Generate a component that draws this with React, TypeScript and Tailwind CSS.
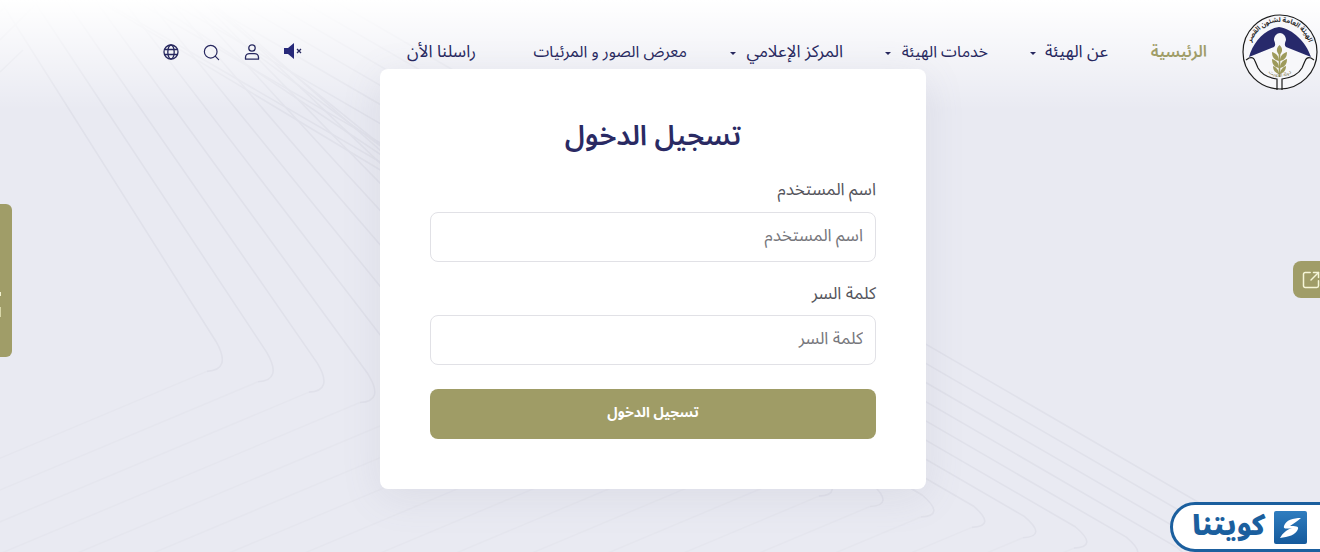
import { Search, SquareArrowOutUpRight } from "lucide-react";

const arabic = "font-['Noto_Sans_Arabic','DejaVu_Sans','Noto_Sans',sans-serif]";

// the page's background artwork: a family of bent lines
function BackgroundLines() {
  const lines = Array.from({ length: 23 }, (_, i) => {
    const cx = 229 + 51 * i;
    const cy = 362 + 10.4 * i;
    const slope = Math.max(1.58 - 0.07 * i, 0.58);
    const top = cy / slope;
    const r = 24;
    const ux = cx - r / Math.hypot(1, slope);
    const uy = cy - (r * slope) / Math.hypot(1, slope);
    const lx = cx - r * 0.92;
    const ly = cy + r * 0.39;
    return {
      upper: `M${cx - top} 0L${ux} ${uy}Q${cx + 3} ${cy + 8} ${lx} ${ly}`,
      lower: `M${lx} ${ly}L${cx - 700} ${cy + 294}`,
    };
  });
  return (
    <svg className="absolute inset-0 h-full w-full" viewBox="0 0 1320 552" fill="none">
      {lines.map(({ upper, lower }) => (
        <g key={upper}>
          <path d={upper} stroke="#e0e1ea" strokeWidth="1.6" />
          <path d={lower} stroke="#e5e6ee" strokeWidth="1.5" />
        </g>
      ))}
      <path d="M0 72L23 50M0 40L40 0M0 12L12 0" stroke="#e0e1ea" strokeWidth="1.6" />
    </svg>
  );
}

function Logo() {
  return (
    <svg width="78" height="80" viewBox="0 0 78 80" fill="none">
      <defs>
        <path id="logo-arc" d="M9 46A30.5 30.5 0 1 1 69 46" />
        <path id="logo-arc-low" d="M25 58A18 18 0 0 0 53 58" />
      </defs>
      <circle cx="39" cy="40" r="37" fill="#f7f7fa" stroke="#1c1c1c" strokeWidth="1.2" />
      <text fontSize="6.6" fontWeight="700" fill="#2b2b2b" direction="rtl">
        <textPath href="#logo-arc" startOffset="50%" textAnchor="middle">
          الهيئة العامة لشئون القصر
        </textPath>
      </text>
      <path
        d="M8 45C12 30 24 17 38 15C52 17 65 30 70 45L45 35C43 33 44 31 45 28C45 24 42 21 39 21C36 21 33 24 33 28C34 31 35 33 33 35Z"
        fill="#27296b"
      />
      <path d="M38.5 36V65" stroke="#9d9a5b" strokeWidth="1.6" />
      <path
        d="M38.5 33C35 36 35 40 38.5 43C42 40 42 36 38.5 33ZM31 40C31 45 33 48 38 49C38 44 35 41 31 40ZM46 40C46 45 44 48 39 49C39 44 42 41 46 40ZM31 47C31 52 33 55 38 56C38 51 35 48 31 47ZM46 47C46 52 44 55 39 56C39 51 42 48 46 47ZM32 54C32 59 35 61 38 62C38 58 35 55 32 54ZM45 54C45 59 42 61 39 62C39 58 42 55 45 54Z"
        fill="#9d9a5b"
      />
      <path
        d="M5 48L8 46C11 45 13 46 14 49L17 56C21 63 29 66 36 67V78M73 48L70 46C67 45 65 46 64 49L61 56C57 63 49 66 41 67V78"
        stroke="#1c1c1c"
        strokeWidth="1.2"
      />
      <text fontSize="5" fill="#77764a" direction="rtl">
        <textPath href="#logo-arc-low" startOffset="50%" textAnchor="middle">
          دولة الكويت
        </textPath>
      </text>
    </svg>
  );
}

function Caret() {
  return <span className="mt-[2px] h-0 w-0 border-x-[3px] border-t-[3px] border-x-transparent border-t-[#27285f]" />;
}

function NavItem({ label, caret, className }: { label: string; caret?: boolean; className: string }) {
  return (
    <a className={`flex shrink-0 items-center justify-between whitespace-nowrap leading-none ${className}`}>
      {label}
      {caret && <Caret />}
    </a>
  );
}

function Header() {
  return (
    <header dir="rtl" className="relative flex h-[104px] items-start pr-[1px] pt-[12px]">
      <Logo />
      <nav className="mr-[34px] flex h-[80px] items-center text-[#27285f]">
        <NavItem label="الرئيسية" className="ml-[40px] w-[59px] text-[16px] font-semibold text-[#a09d68]" />
        <NavItem label="عن الهيئة" caret className="ml-[42px] w-[78px] text-[17px]" />
        <NavItem label="خدمات الهيئة" caret className="ml-[42px] w-[103px] text-[16px]" />
        <NavItem label="المركز الإعلامي" caret className="ml-[43px] w-[113px] text-[17px]" />
        <NavItem label="معرض الصور و المرئيات" className="ml-[54px] w-[157px] text-[16px]" />
        <NavItem label="راسلنا الأن" className="ml-[102px] w-[72px] text-[17px]" />
      </nav>
      <div className="flex h-[80px] items-center gap-[24px] text-[#27285f]">
        <svg width="18" height="16" viewBox="0 0 18 16" className="-mt-[3px]">
          <path d="M0 5H4L10 0V16L4 11H0Z" fill="#27297a" />
          <path d="M13 6L17 10M17 6L13 10" stroke="#27285f" strokeWidth="1.3" />
        </svg>
        <svg width="16" height="16" viewBox="0 0 16 16" fill="none" stroke="currentColor" strokeWidth="1.3">
          <circle cx="8" cy="4" r="3.2" />
          <path d="M1.5 15.2V13.4C1.5 11 3.5 9.6 5.5 9.6H10.5C12.5 9.6 14.5 11 14.5 13.4V15.2Z" strokeLinejoin="round" />
        </svg>
        <Search size={19} strokeWidth={1.5} className="-mx-[1px]" />
        <svg width="16" height="16" viewBox="0 0 16 16" fill="none" stroke="currentColor" strokeWidth="1.3">
          <circle cx="8" cy="8" r="7" />
          <ellipse cx="8" cy="8" rx="3.2" ry="7" />
          <path d="M1.6 5.5H14.4M1.6 10.5H14.4" />
        </svg>
      </div>
    </header>
  );
}

function Field({ label, className }: { label: string; className: string }) {
  return (
    <label className={`flex flex-col ${className}`}>
      <span className="h-[20px] text-[17px] leading-[20px] text-[#55555c]">{label}</span>
      <input
        placeholder={label}
        className="h-[50px] rounded-lg border border-[#e1e1e6] bg-white px-[12px] pb-[3px] text-[17px] outline-none placeholder:text-[#77777c]"
      />
    </label>
  );
}

function LoginCard() {
  return (
    <main className="relative ml-[380px] -mt-[35px] w-[546px] rounded-lg bg-white p-[50px] shadow-[0_8px_40px_rgba(120,120,150,0.12)]">
      <form dir="rtl" className="flex flex-col">
        <h1 className="h-[34px] text-center text-[28px] font-semibold leading-[36px] text-[#2a2a63]">تسجيل الدخول</h1>
        <Field label="اسم المستخدم" className="mt-[27px] gap-[12px]" />
        <Field label="كلمة السر" className="mt-[22px] gap-[11px]" />
        <button type="button" className="mt-[24px] h-[50px] rounded-lg bg-[#9f9c66] pb-[3px] text-[14px] font-bold text-white">
          تسجيل الدخول
        </button>
      </form>
    </main>
  );
}

export default function App() {
  return (
    <div className={`relative h-[552px] w-[1320px] overflow-hidden bg-[#e9eaf2] ${arabic}`}>
      <BackgroundLines />
      <div className="absolute inset-x-0 top-0 h-[110px] bg-gradient-to-b from-white to-[#eeeef4]/0" />
      <Header />
      <LoginCard />

      <div className="absolute left-0 top-[204px] h-[153px] w-[12px] rounded-r-md bg-[#a09d68]">
        <span className="absolute left-0 top-[88px] h-[4px] w-[1px] bg-[#f2f2d0]" />
        <span className="absolute left-0 top-[103px] h-[10px] w-[1px] bg-[#d8d7a8]" />
      </div>
      <div className="absolute right-0 top-[261px] flex h-[37px] w-[27px] items-center overflow-hidden rounded-l-lg bg-[#a09d68] pl-[8px] text-[#f6f6d8]">
        <SquareArrowOutUpRight size={20} strokeWidth={1.8} className="shrink-0" />
      </div>

      <div className="absolute bottom-0 right-[-24px] flex h-[50px] w-[174px] items-center gap-[8px] rounded-l-[25px] border-[3px] border-[#1b5f9e] bg-white pl-[19px]">
        <span dir="rtl" className="text-[28px] font-black leading-[40px] text-[#1b5f9e]">كويتنا</span>
        <svg width="33" height="33" viewBox="0 0 33 33" className="shrink-0">
          <defs>
            <linearGradient id="badge-blue" x1="0" y1="0" x2="0" y2="1">
              <stop offset="0" stopColor="#2f7dbf" />
              <stop offset="1" stopColor="#155a9c" />
            </linearGradient>
          </defs>
          <rect width="33" height="33" rx="2" fill="url(#badge-blue)" />
          <path d="M27 7C19 7 12 9 10 15C9 18 12 18 18 17C12 19 9 22 6 27C14 26 22 24 24 18C25 15 21 15 16 15C20 12 24 10 27 7Z" fill="#fff" />
        </svg>
      </div>
    </div>
  );
}
